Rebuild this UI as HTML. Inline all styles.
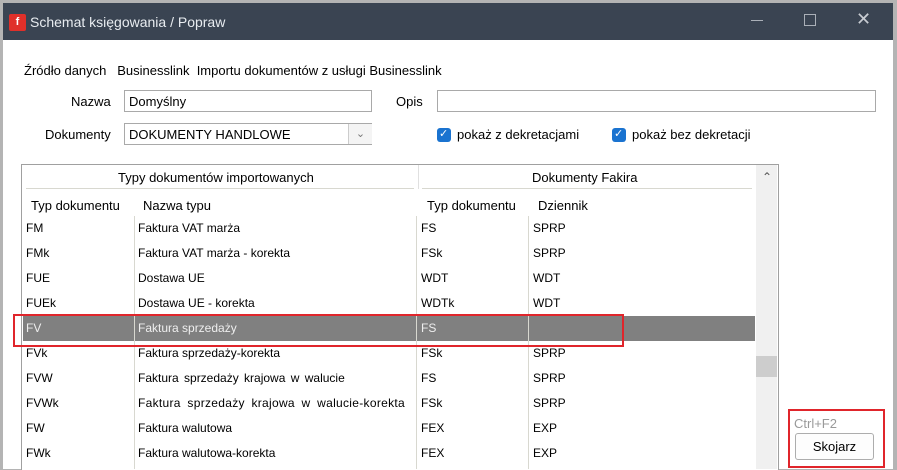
<!DOCTYPE html><html><head><meta charset="utf-8"><style>
body{margin:0;width:897px;height:469px;background:#b4b4b4;position:relative;overflow:hidden;font-family:"Liberation Sans",sans-serif;font-size:13px;color:#000}
.a{position:absolute;white-space:nowrap}
#win{position:absolute;left:3px;top:3px;width:890px;height:466px;background:#fff}
#tb{position:absolute;left:3px;top:3px;width:890px;height:37px;background:#3a4452;color:#fff}
.inp{position:absolute;border:1px solid #a9a9a9;background:#fff;height:22px;box-sizing:border-box;padding:3px 4px;font-size:13px}
.cb{position:absolute;width:14px;height:14px;background:#1a73d0;border-radius:3px}
.row{position:absolute;left:23px;width:732px;height:25px;font-size:12px}
.row span{position:absolute;top:5px}
</style></head><body>
<div id="win"></div>
<div id="tb">
<div class="a" style="left:6px;top:11px;width:17px;height:17px;background:#e0302a;border-radius:2px;color:#fff;font-weight:bold;font-size:11px;text-align:center;line-height:17px">f</div>
<div class="a" style="left:27px;top:11px;font-size:14px;color:#e8ecf0">Schemat księgowania / Popraw</div>
<div class="a" style="left:748px;top:17px;width:12px;height:1px;background:#aab0b8"></div>
<div class="a" style="left:801px;top:11px;width:10px;height:10px;border:1px solid #aab0b8"></div>
<div class="a" style="left:853px;top:6px;font-size:18px;color:#c8ccd2">✕</div>
</div>
<div class="a" style="left:24px;top:63px">Źródło danych&nbsp;&nbsp; Businesslink&nbsp; Importu dokumentów z usługi Businesslink</div>
<div class="a" style="left:71px;top:94px">Nazwa</div>
<div class="inp" style="left:124px;top:90px;width:248px">Domyślny</div>
<div class="a" style="left:396px;top:94px">Opis</div>
<div class="inp" style="left:437px;top:90px;width:439px"></div>
<div class="a" style="left:45px;top:127px">Dokumenty</div>
<div class="inp" style="left:124px;top:123px;width:248px">DOKUMENTY HANDLOWE</div>
<div class="a" style="left:348px;top:124px;width:23px;height:20px;border-left:1px solid #ccc;background:#f4f4f4;text-align:center;color:#777;font-size:11px;line-height:20px">⌄</div>
<div class="cb" style="left:437px;top:128px"></div><div class="a" style="left:439px;top:127px;color:#fff;font-size:11px">✓</div>
<div class="a" style="left:457px;top:127px">pokaż z dekretacjami</div>
<div class="cb" style="left:612px;top:128px"></div><div class="a" style="left:614px;top:127px;color:#fff;font-size:11px">✓</div>
<div class="a" style="left:632px;top:127px">pokaż bez dekretacji</div>
<div class="a" style="left:21px;top:164px;width:756px;height:305px;border:1px solid #a0a0a0;border-bottom:none;background:#fff"></div>
<div class="a" style="left:118px;top:170px">Typy dokumentów importowanych</div>
<div class="a" style="left:532px;top:170px">Dokumenty Fakira</div>
<div class="a" style="left:26px;top:188px;width:388px;height:1px;background:#d8d8d0"></div>
<div class="a" style="left:422px;top:188px;width:330px;height:1px;background:#d8d8d0"></div>
<div class="a" style="left:418px;top:165px;width:1px;height:24px;background:#e0e0e0"></div>
<div class="a" style="left:31px;top:198px">Typ dokumentu</div>
<div class="a" style="left:143px;top:198px">Nazwa typu</div>
<div class="a" style="left:427px;top:198px">Typ dokumentu</div>
<div class="a" style="left:538px;top:198px">Dziennik</div>
<div class="row" style="top:216px"><span style="left:3px">FM</span><span style="left:115px">Faktura VAT marża</span><span style="left:398px">FS</span><span style="left:510px">SPRP</span></div>
<div class="row" style="top:241px"><span style="left:3px">FMk</span><span style="left:115px">Faktura VAT marża - korekta</span><span style="left:398px">FSk</span><span style="left:510px">SPRP</span></div>
<div class="row" style="top:266px"><span style="left:3px">FUE</span><span style="left:115px">Dostawa UE</span><span style="left:398px">WDT</span><span style="left:510px">WDT</span></div>
<div class="row" style="top:291px"><span style="left:3px">FUEk</span><span style="left:115px">Dostawa UE - korekta</span><span style="left:398px">WDTk</span><span style="left:510px">WDT</span></div>
<div class="row" style="top:316px;background:#808080;color:#eee"><span style="left:3px">FV</span><span style="left:115px">Faktura sprzedaży</span><span style="left:398px">FS</span></div>
<div class="row" style="top:341px"><span style="left:3px">FVk</span><span style="left:115px">Faktura sprzedaży-korekta</span><span style="left:398px">FSk</span><span style="left:510px">SPRP</span></div>
<div class="row" style="top:366px"><span style="left:3px">FVW</span><span style="left:115px;word-spacing:2px">Faktura sprzedaży krajowa w walucie</span><span style="left:398px">FS</span><span style="left:510px">SPRP</span></div>
<div class="row" style="top:391px"><span style="left:3px">FVWk</span><span style="left:115px;width:278px;overflow:hidden;word-spacing:3px;letter-spacing:0.3px">Faktura sprzedaży krajowa w walucie-korekta</span><span style="left:398px">FSk</span><span style="left:510px">SPRP</span></div>
<div class="row" style="top:416px"><span style="left:3px">FW</span><span style="left:115px">Faktura walutowa</span><span style="left:398px">FEX</span><span style="left:510px">EXP</span></div>
<div class="row" style="top:441px"><span style="left:3px">FWk</span><span style="left:115px">Faktura walutowa-korekta</span><span style="left:398px">FEX</span><span style="left:510px">EXP</span></div>
<div class="a" style="left:134px;top:216px;width:1px;height:253px;background:#d8d8d0"></div>
<div class="a" style="left:416px;top:216px;width:1px;height:253px;background:#d8d8d0"></div>
<div class="a" style="left:528px;top:216px;width:1px;height:253px;background:#d8d8d0"></div>
<div class="a" style="left:756px;top:165px;width:21px;height:304px;background:#f0f0f0"></div>
<div class="a" style="left:762px;top:170px;color:#555;font-size:12px">⌃</div>
<div class="a" style="left:756px;top:356px;width:21px;height:21px;background:#cdcdcd"></div>
<div class="a" style="left:13px;top:314px;width:607px;height:29px;border:2px solid #e0252b"></div>
<div class="a" style="left:788px;top:409px;width:93px;height:55px;border:2px solid #e0252b"></div>
<div class="a" style="left:794px;top:416px;color:#999">Ctrl+F2</div>
<div class="a" style="left:795px;top:433px;width:77px;height:25px;border:1px solid #adadad;border-radius:3px;background:#fdfdfd;text-align:center;line-height:25px">Skojarz</div>
</body></html>
